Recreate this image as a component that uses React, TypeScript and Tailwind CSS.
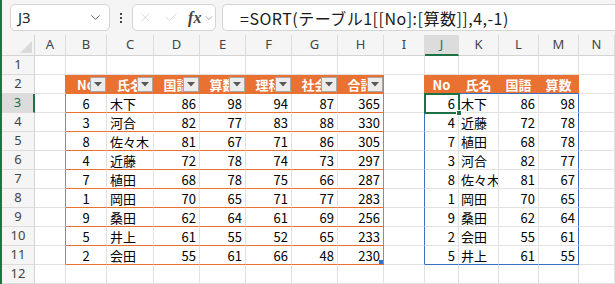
import { ChevronDown, X, Check } from "lucide-react";

const letters = ["A", "B", "C", "D", "E", "F", "G", "H", "I", "J", "K", "L", "M", "N"];

const leftHeader = ["No", "氏名", "国語", "算数", "理科", "社会", "合計"];
const leftRows: (string | number)[][] = [
  [6, "木下", 86, 98, 94, 87, 365],
  [3, "河合", 82, 77, 83, 88, 330],
  [8, "佐々木", 81, 67, 71, 86, 305],
  [4, "近藤", 72, 78, 74, 73, 297],
  [7, "植田", 68, 78, 75, 66, 287],
  [1, "岡田", 70, 65, 71, 77, 283],
  [9, "桑田", 62, 64, 61, 69, 256],
  [5, "井上", 61, 55, 52, 65, 233],
  [2, "会田", 55, 61, 66, 48, 230],
];

const rightHeader = ["No", "氏名", "国語", "算数"];
const rightRows: (string | number)[][] = [
  [6, "木下", 86, 98],
  [4, "近藤", 72, 78],
  [7, "植田", 68, 78],
  [3, "河合", 82, 77],
  [8, "佐々木", 81, 67],
  [1, "岡田", 70, 65],
  [9, "桑田", 62, 64],
  [2, "会田", 55, 61],
  [5, "井上", 61, 55],
];

const FilterButton = () => (
  <div className="absolute right-0 top-[2px] w-[16px] h-[15px] bg-[#ececec] border border-[#a6a6a6] flex items-center justify-center">
    <svg width="8" height="5" viewBox="0 0 8 5">
      <path d="M0 0h8L4 4.5z" fill="#595959" />
    </svg>
  </div>
);

const Cell = ({ r, c }: { r: number; c: number }) => {
  const inLeft = c >= 2 && c <= 8 && r >= 2 && r <= 11;
  const inRight = c >= 10 && c <= 13 && r >= 2 && r <= 11;
  const isHead = (inLeft || inRight) && r === 2;

  let rightBorder = "border-r-[#e1e1e1]";
  if (r >= 2 && r <= 11 && (c === 1 || c === 8)) rightBorder = "border-r-[#e97132]";
  if (r === 2 && (inLeft || inRight || c === 9)) rightBorder = "border-r-[#e97132]";
  if (r >= 3 && r <= 11 && (c === 9 || c === 13)) rightBorder = "border-r-[#3b6fc6]";

  let bottomBorder = "border-b-[#e1e1e1]";
  if (inLeft) bottomBorder = "border-b-[#e97132]";
  if (inRight && (r === 2 || r === 11)) bottomBorder = "border-b-[#3b6fc6]";

  let text: string | number = "";
  let align = "justify-end pr-[3px]";
  if (inLeft) {
    text = r === 2 ? leftHeader[c - 2] : leftRows[r - 3][c - 2];
    if (r === 2 || c === 2) align = "justify-center";
    else if (c === 3) align = "justify-start pl-[3px]";
  }
  if (inRight) {
    text = r === 2 ? rightHeader[c - 10] : rightRows[r - 3][c - 10];
    if (r === 2) align = "justify-center";
    else if (c === 11) align = "justify-start pl-[2px]";
  }

  const selected = r === 3 && c === 10;

  return (
    <div
      className={`relative border-r border-b flex items-center whitespace-nowrap ${rightBorder} ${bottomBorder} ${align} ${
        isHead ? "bg-[#e97132] text-white font-bold" : "bg-white text-black"
      } ${selected ? "" : "overflow-hidden"}`}
    >
      <span className="leading-none">{text}</span>
      {isHead && inLeft && <FilterButton />}
      {selected && (
        <>
          <div className="absolute -left-[1px] -top-[1px] w-[36px] h-[21px] border-2 border-[#1e7145] z-10" />
          <div className="absolute left-[31px] top-[16px] w-[6px] h-[6px] bg-[#1e7145] border border-white z-20" />
        </>
      )}
      {r === 11 && c === 8 && (
        <div className="absolute right-0 bottom-0 w-[4px] h-[4px] bg-[#3b6fc6]" />
      )}
    </div>
  );
};

export default function App() {
  const rows = Array.from({ length: 12 }, (_, i) => i + 1);
  const cols = Array.from({ length: 14 }, (_, i) => i + 1);

  return (
    <div className="w-[615px] h-[284px] overflow-hidden bg-white flex font-['Noto_Sans_CJK_JP',sans-serif]">
      <div className="w-[2px] shrink-0 bg-[#107c41]" />
      <div className="flex-1 flex flex-col min-w-0">
        {/* formula bar */}
        <div className="h-[35px] shrink-0 bg-[#f5f5f5] flex items-start pt-[4px] pl-[8px]">
          <div className="w-[100px] h-[27px] bg-white border border-[#d4d4d4] rounded-[5px] flex items-center justify-between pl-[7px] pr-[6px]">
            <span className="text-[15px] text-[#262626] font-['Noto_Sans',sans-serif]">J3</span>
            <ChevronDown size={15} strokeWidth={1.5} color="#555" />
          </div>
          <div className="w-[22px] h-[27px] flex flex-col items-center justify-center gap-[2px]">
            <div className="w-[2px] h-[2px] bg-[#444]" />
            <div className="w-[2px] h-[2px] bg-[#444]" />
            <div className="w-[2px] h-[2px] bg-[#444]" />
          </div>
          <div className="w-[84px] h-[27px] bg-white border border-[#d4d4d4] rounded-[5px] flex items-center pl-[5px]">
            <X size={15} strokeWidth={1} color="#bdbdbd" />
            <Check size={15} strokeWidth={1} color="#bdbdbd" className="ml-[11px]" />
            <span className="ml-[10px] text-[16px] italic font-bold text-[#444] font-['Liberation_Serif',serif] leading-none">
              fx
            </span>
            <ChevronDown size={12} strokeWidth={1.5} color="#888" className="ml-[2px]" />
          </div>
          <div className="ml-[6px] flex-1 h-[27px] bg-white border border-r-0 border-[#d4d4d4] rounded-l-[5px] flex items-center pl-[17px] text-[16px] tracking-[0.5px] text-[#1a1a1a] whitespace-nowrap">
            =SORT(テーブル1[[No]:[算数]],4,-1)
          </div>
        </div>

        {/* sheet grid */}
        <div className="grid grid-cols-[33px_31px_41px_47px_46px_46px_46px_46px_46px_41px_34px_40px_40px_40px_1fr] grid-rows-[21px_repeat(12,19px)] text-[13px]">
          <div className="bg-[#f5f5f5] border-r border-b border-[#d4d4d4] flex items-end justify-end p-[2px]">
            <svg width="12" height="12" viewBox="0 0 12 12">
              <path d="M12 0V12H0z" fill="#d9d9d9" />
            </svg>
          </div>
          {letters.map((l) => (
            <div
              key={l}
              className={`flex items-center justify-center border-r border-[#dcdcdc] font-['Noto_Sans',sans-serif] ${
                l === "J"
                  ? "bg-[#dcdcdc] border-b-2 border-b-[#1e7145] text-[#1e7145]"
                  : "bg-[#f5f5f5] border-b border-b-[#d4d4d4] text-[#444]"
              }`}
            >
              {l}
            </div>
          ))}
          {rows.map((r) => (
            <div key={r} className="contents">
              <div
                className={`flex items-center justify-center border-b border-[#dcdcdc] font-['Noto_Sans',sans-serif] ${
                  r === 3
                    ? "bg-[#dcdcdc] border-r-2 border-r-[#1e7145] text-[#1e7145]"
                    : "bg-[#f5f5f5] border-r border-r-[#d4d4d4] text-[#444]"
                }`}
              >
                {r}
              </div>
              {cols.map((c) => (
                <Cell key={c} r={r} c={c} />
              ))}
            </div>
          ))}
        </div>
      </div>
    </div>
  );
}
